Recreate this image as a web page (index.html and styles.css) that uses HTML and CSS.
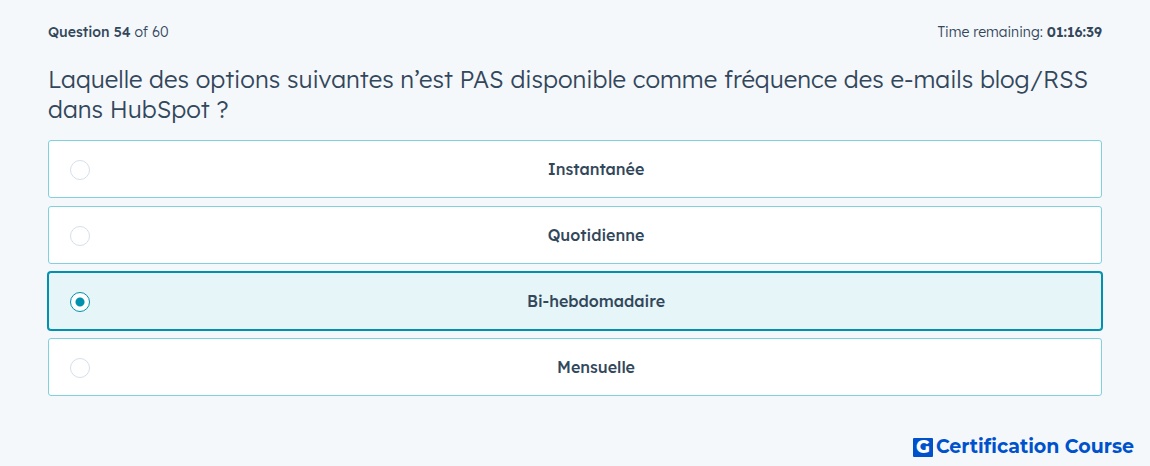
FILE: index.html
```
<!DOCTYPE html>
<html lang="fr">

<head>
    <meta charset="UTF-8">
    <meta name="viewport" content="width=device-width, initial-scale=1.0">
    <title>Certification Course</title>
    <link rel="stylesheet" href="styles.css">
</head>

<body>
    <main class="quiz">
        <header class="quiz-header">
            <div><strong>Question 54</strong> of 60</div>
            <div>Time remaining: <strong class="time">01:16:39</strong></div>
        </header>
        <form>
            <h1 class="question" id="question">Laquelle des options suivantes n’est PAS disponible comme fréquence des e-mails blog/RSS dans HubSpot ?</h1>
            <div class="options" role="radiogroup" aria-labelledby="question">
                <label class="option">
                    <input type="radio" name="answer" value="1">
                    <span>Instantanée</span>
                </label>
                <label class="option">
                    <input type="radio" name="answer" value="2">
                    <span>Quotidienne</span>
                </label>
                <label class="option">
                    <input type="radio" name="answer" value="3" checked>
                    <span>Bi-hebdomadaire</span>
                </label>
                <label class="option">
                    <input type="radio" name="answer" value="4">
                    <span>Mensuelle</span>
                </label>
            </div>
        </form>
    </main>
    <footer class="brand">
        <span class="logo">G</span>
        <span>Certification Course</span>
    </footer>
</body>

</html>
```
FILE: styles.css
```
* {
    box-sizing: border-box;
}

body {
    margin: 0;
    min-height: 100vh;
    display: flex;
    flex-direction: column;
    background: #f5f8fb;
    color: #33475b;
    font-family: "Lexend Deca", Inter, sans-serif;
    font-weight: 300;
}

.quiz {
    flex: 1;
    padding: 20px 48px;
}

.quiz-header {
    display: flex;
    justify-content: space-between;
    font-size: 14px;
    line-height: 24px;
}

.quiz-header strong {
    font-weight: 500;
}

.quiz-header .time {
    font-weight: 600;
}

.question {
    margin: 20px 0 16px;
    font-size: 24px;
    font-weight: 300;
    line-height: 30px;
}

.options {
    display: flex;
    flex-direction: column;
    gap: 8px;
}

.option {
    display: flex;
    align-items: center;
    padding: 18px 21px 17px;
    background: #fff;
    border: 1px solid #7fd1de;
    border-radius: 3px;
    cursor: pointer;
}

.option span {
    flex: 1;
    padding-left: 22px;
    text-align: center;
    font-size: 16px;
    font-weight: 500;
    line-height: 21px;
}

.option input {
    appearance: none;
    width: 20px;
    height: 20px;
    margin: 0;
    border: 1px solid #d6e0ea;
    border-radius: 50%;
    background: #fff;
}

.option:has(input:checked) {
    background: #e5f5f8;
    border-color: #0091ae;
    box-shadow: 0 0 0 1px #0091ae;
}

.option input:checked {
    border-color: #0091ae;
    background: radial-gradient(circle, #0091ae 4px, #fff 5px);
}

.brand {
    display: flex;
    align-items: center;
    justify-content: flex-end;
    gap: 3px;
    padding: 0 16px 7px;
    color: #0052cc;
    font-family: Montserrat, Inter, sans-serif;
    font-size: 19px;
    font-weight: 700;
    line-height: 24px;
}

.logo {
    width: 20px;
    border-radius: 1px;
    background: #0052cc;
    color: #fff;
    font-size: 18px;
    font-weight: 800;
    line-height: 19px;
    text-align: center;
}
```
